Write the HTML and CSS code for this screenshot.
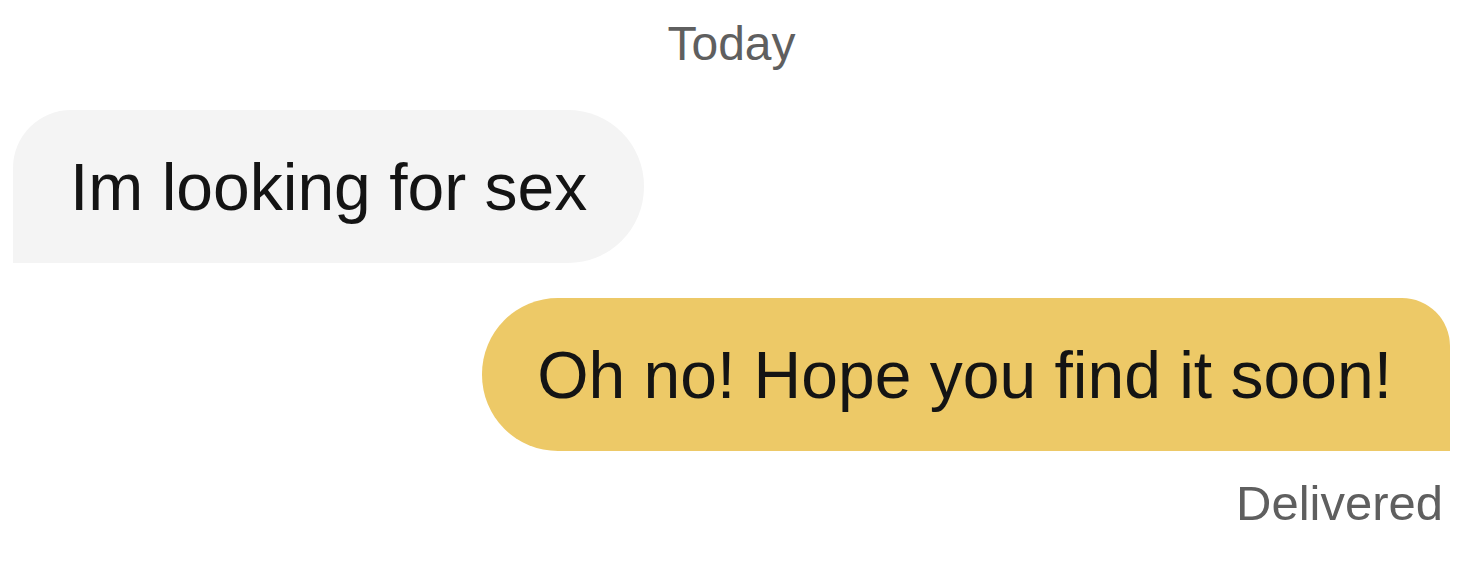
FILE: index.html
```html
<!DOCTYPE html>
<html lang="en">
<head>
    <meta charset="UTF-8">
    <meta name="viewport" content="width=device-width, initial-scale=1.0">
    <title>Chat</title>
    <link rel="stylesheet" href="styles.css">
</head>
<body>
    <div class="chat">
        <p class="day">Today</p>

        <div class="bubble incoming">Im looking for sex</div>

        <div class="bubble outgoing">Oh no! Hope you find it soon!</div>

        <p class="status">Delivered</p>
    </div>
</body>
</html>
```

FILE: styles.css
```css
body {
    font-family: "Liberation Sans", Arial, sans-serif;
    margin: 0;
    padding: 0;
    background-color: #ffffff;
}

.chat {
    display: flex;
    flex-direction: column;
    padding: 14px 26px 0 13px;
}

.day {
    margin: 0;
    align-self: center;
    font-size: 48px;
    line-height: 60px;
    color: #5f5f5f;
}

.bubble {
    font-size: 66px;
    line-height: 64px;
    color: #141414;
    padding: 45px 57px 44px 57px;
}

.incoming {
    align-self: flex-start;
    margin-top: 36px;
    background-color: #f4f4f4;
    border-radius: 58px 76px 76px 0;
}

.outgoing {
    align-self: flex-end;
    margin-top: 35px;
    background-color: #edc967;
    border-radius: 76px 48px 0 76px;
    padding-left: 55px;
    padding-right: 58px;
}

.status {
    margin: 28px 7px 0 0;
    align-self: flex-end;
    font-size: 49px;
    line-height: 48px;
    color: #5f5f5f;
}
```
